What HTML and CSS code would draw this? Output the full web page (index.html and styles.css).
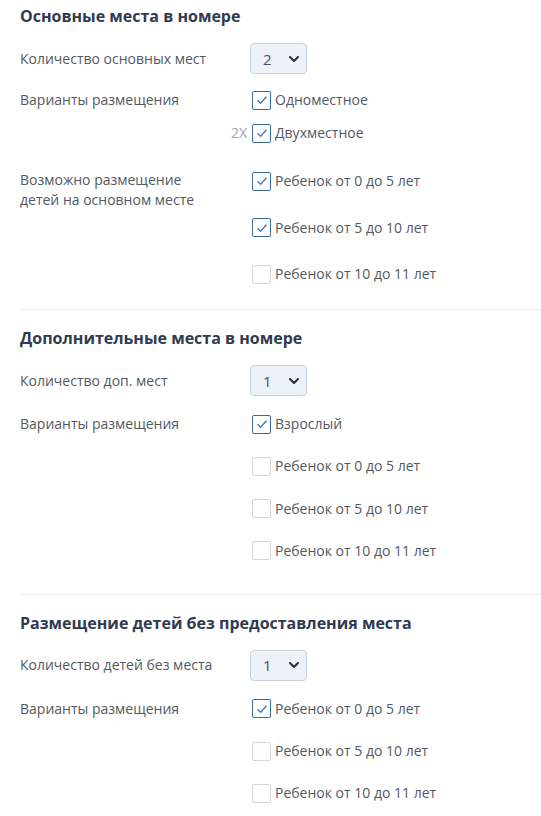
FILE: index.html
```html
<!DOCTYPE html>
<html lang="ru">
<head>
    <meta charset="UTF-8">
    <meta name="viewport" content="width=device-width, initial-scale=1.0">
    <title>Места в номере</title>
    <link rel="stylesheet" href="styles.css">
</head>
<body>
    <main class="rooms">
        <section class="block block-main">
            <h2 class="block-title">Основные места в номере</h2>
            <div class="row row-select">
                <div class="label">Количество основных мест</div>
                <div class="select"><span>2</span><svg width="10" height="6" viewBox="0 0 10 6"><path d="M1 1l4 4 4-4" fill="none" stroke="#2b2f36" stroke-width="2" stroke-linecap="round" stroke-linejoin="round"/></svg></div>
            </div>
            <div class="row">
                <div class="label">Варианты размещения</div>
                <div class="options tight">
                    <label class="option"><span class="box checked"><svg width="12" height="10" viewBox="0 0 12 10"><path d="M1.5 5.2l3 3 6-6.5" fill="none" stroke="#3a7ac4" stroke-width="1.4"/></svg></span>Одноместное</label>
                    <label class="option"><span class="prefix">2X</span><span class="box checked"><svg width="12" height="10" viewBox="0 0 12 10"><path d="M1.5 5.2l3 3 6-6.5" fill="none" stroke="#3a7ac4" stroke-width="1.4"/></svg></span>Двухместное</label>
                </div>
            </div>
            <div class="row row-kids">
                <div class="label">Возможно размещение<br>детей на основном месте</div>
                <div class="options wide">
                    <label class="option"><span class="box checked"><svg width="12" height="10" viewBox="0 0 12 10"><path d="M1.5 5.2l3 3 6-6.5" fill="none" stroke="#3a7ac4" stroke-width="1.4"/></svg></span>Ребенок от 0 до 5 лет</label>
                    <label class="option"><span class="box checked"><svg width="12" height="10" viewBox="0 0 12 10"><path d="M1.5 5.2l3 3 6-6.5" fill="none" stroke="#3a7ac4" stroke-width="1.4"/></svg></span>Ребенок от 5 до 10 лет</label>
                    <label class="option"><span class="box"></span>Ребенок от 10 до 11 лет</label>
                </div>
            </div>
        </section>

        <section class="block block-extra">
            <h2 class="block-title">Дополнительные места в номере</h2>
            <div class="row row-select">
                <div class="label">Количество доп. мест</div>
                <div class="select"><span>1</span><svg width="10" height="6" viewBox="0 0 10 6"><path d="M1 1l4 4 4-4" fill="none" stroke="#2b2f36" stroke-width="2" stroke-linecap="round" stroke-linejoin="round"/></svg></div>
            </div>
            <div class="row row-list">
                <div class="label">Варианты размещения</div>
                <div class="options">
                    <label class="option"><span class="box checked"><svg width="12" height="10" viewBox="0 0 12 10"><path d="M1.5 5.2l3 3 6-6.5" fill="none" stroke="#3a7ac4" stroke-width="1.4"/></svg></span>Взрослый</label>
                    <label class="option"><span class="box"></span>Ребенок от 0 до 5 лет</label>
                    <label class="option"><span class="box"></span>Ребенок от 5 до 10 лет</label>
                    <label class="option"><span class="box"></span>Ребенок от 10 до 11 лет</label>
                </div>
            </div>
        </section>

        <section class="block block-nobed">
            <h2 class="block-title">Размещение детей без предоставления места</h2>
            <div class="row row-select">
                <div class="label">Количество детей без места</div>
                <div class="select"><span>1</span><svg width="10" height="6" viewBox="0 0 10 6"><path d="M1 1l4 4 4-4" fill="none" stroke="#2b2f36" stroke-width="2" stroke-linecap="round" stroke-linejoin="round"/></svg></div>
            </div>
            <div class="row row-list">
                <div class="label">Варианты размещения</div>
                <div class="options">
                    <label class="option"><span class="box checked"><svg width="12" height="10" viewBox="0 0 12 10"><path d="M1.5 5.2l3 3 6-6.5" fill="none" stroke="#3a7ac4" stroke-width="1.4"/></svg></span>Ребенок от 0 до 5 лет</label>
                    <label class="option"><span class="box"></span>Ребенок от 5 до 10 лет</label>
                    <label class="option"><span class="box"></span>Ребенок от 10 до 11 лет</label>
                </div>
            </div>
        </section>
    </main>
</body>
</html>
```

FILE: styles.css
```css
body {
    font: 14px / 20px "Open Sans", "Noto Sans", sans-serif;
    color: #535961;
    margin: 0;
    background-color: #fff;
}
.rooms {
    padding-left: 20px;
}
.block {
    padding: 17px 0 33px;
    border-top: 1px solid #e7eaee;
}
.block-main {
    padding: 5px 0 25px;
    border-top: none;
}
.block-title {
    font-size: 16px;
    line-height: 22px;
    font-weight: 700;
    color: #2f3b50;
    margin: 0;
}
.row {
    display: flex;
    margin-top: 16px;
}
.row-select {
    align-items: center;
}
.row-list {
    margin-top: 18px;
}
.row-kids {
    margin-top: 27px;
}
.label {
    width: 230px;
    flex-shrink: 0;
}
.select {
    width: 36px;
    height: 29px;
    padding: 0 7px 0 12px;
    border: 1px solid #c9d1dc;
    border-radius: 4px;
    background-color: #edf2f9;
    display: flex;
    align-items: center;
    justify-content: space-between;
    color: #4a4f57;
    font-size: 15px;
}
.options {
    display: flex;
    flex-direction: column;
    gap: 22.3px;
    padding-left: 2px;
}
.options.tight {
    gap: 13px;
}
.options.wide {
    gap: 26.5px;
    padding-top: 1px;
}
.option {
    position: relative;
    display: flex;
    align-items: center;
    gap: 4px;
    height: 20px;
}
.prefix {
    position: absolute;
    right: 100%;
    margin-right: 5px;
    color: #9ba8b8;
}
.box {
    width: 17px;
    height: 17px;
    border: 1px solid #cfd6de;
    border-radius: 2px;
    display: flex;
    align-items: center;
    justify-content: center;
}
.box.checked {
    border-color: #3c6b98;
}
```
